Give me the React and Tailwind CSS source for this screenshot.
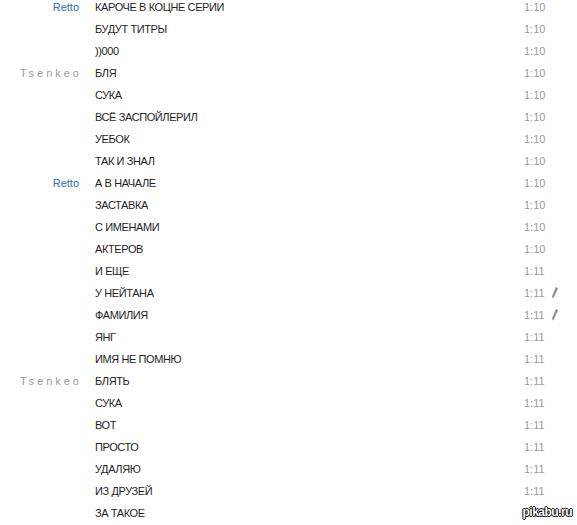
const messages = [
  { from: "Retto", text: "КАРОЧЕ В КОЦНЕ СЕРИИ", time: "1:10" },
  { text: "БУДУТ ТИТРЫ", time: "1:10" },
  { text: "))000", time: "1:10" },
  { from: "Tsenkeo", text: "БЛЯ", time: "1:10" },
  { text: "СУКА", time: "1:10" },
  { text: "ВСЁ ЗАСПОЙЛЕРИЛ", time: "1:10" },
  { text: "УЕБОК", time: "1:10" },
  { text: "ТАК И ЗНАЛ", time: "1:10" },
  { from: "Retto", text: "А В НАЧАЛЕ", time: "1:10" },
  { text: "ЗАСТАВКА", time: "1:10" },
  { text: "С ИМЕНАМИ", time: "1:10" },
  { text: "АКТЕРОВ", time: "1:10" },
  { text: "И ЕЩЕ", time: "1:11" },
  { text: "У НЕЙТАНА", time: "1:11", edited: true },
  { text: "ФАМИЛИЯ", time: "1:11", edited: true },
  { text: "ЯНГ", time: "1:11" },
  { text: "ИМЯ НЕ ПОМНЮ", time: "1:11" },
  { from: "Tsenkeo", text: "БЛЯТЬ", time: "1:11" },
  { text: "СУКА", time: "1:11" },
  { text: "ВОТ", time: "1:11" },
  { text: "ПРОСТО", time: "1:11" },
  { text: "УДАЛЯЮ", time: "1:11" },
  { text: "ИЗ ДРУЗЕЙ", time: "1:11" },
  { text: "ЗА ТАКОЕ", time: "1:11" },
];

// small grey pencil shown next to edited messages
const Pencil = () => (
  <svg width="6" height="12" viewBox="0 0 6 12" className="block">
    <path d="M4 0 L6 1 L2 10 L0.5 11.5 L0.2 9 Z" fill="#8a8a8a" />
  </svg>
);

export default function App() {
  return (
    <div className="relative w-[577px] h-[525px] overflow-hidden bg-white font-['Liberation_Sans',Arial,sans-serif] text-[11px]">
      <div className="-mt-[4px]">
        {messages.map((m, i) => (
          <div key={i} className="flex items-center h-[22px] leading-[22px]">
            <div className="w-[80px] text-right pr-[1px]">
              {m.from === "Retto" && <span className="text-[#2a6fc0]">Retto</span>}
              {m.from === "Tsenkeo" && (
                <span className="text-[#9a9a9a] tracking-[3px] mr-[-3px]">Tsenkeo</span>
              )}
            </div>
            <div className="ml-[15px] w-[429px] text-[#1e1e1e] tracking-[-0.4px]">{m.text}</div>
            <div className="w-[28px] text-[#9c9a96]">{m.time}</div>
            <div className="w-[10px]">{m.edited && <Pencil />}</div>
          </div>
        ))}
      </div>
      <div className="absolute right-[5px] bottom-[4px] text-[12px] font-bold text-white tracking-[-0.5px] [text-shadow:-1px_0_#000,1px_0_#000,0_-1px_#000,0_1px_#000]">
        pikabu.ru
      </div>
    </div>
  );
}
